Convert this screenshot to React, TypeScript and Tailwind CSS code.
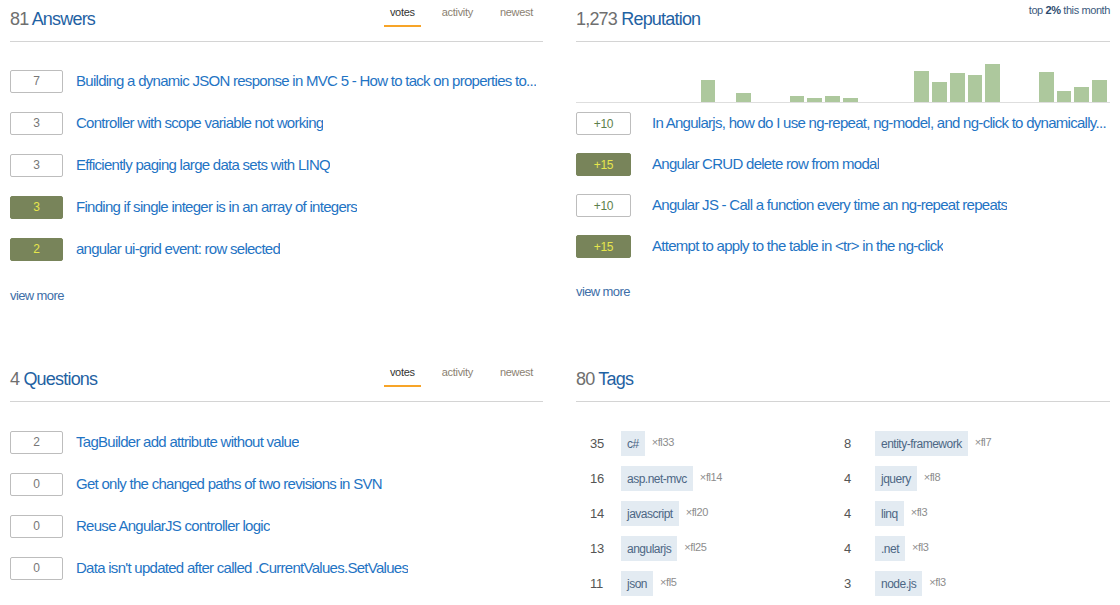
// Profile summary: answers, reputation, questions and tags in a 2x2 layout.

const FONT = "font-['Liberation_Sans',Arial,sans-serif]";

type Post = { score: string; title: string; accepted?: boolean };

const answers: Post[] = [
  { score: "7", title: "Building a dynamic JSON response in MVC 5 - How to tack on properties to..." },
  { score: "3", title: "Controller with scope variable not working" },
  { score: "3", title: "Efficiently paging large data sets with LINQ" },
  { score: "3", title: "Finding if single integer is in an array of integers", accepted: true },
  { score: "2", title: "angular ui-grid event: row selected", accepted: true },
];

const repPosts: Post[] = [
  { score: "+10", title: "In Angularjs, how do I use ng-repeat, ng-model, and ng-click to dynamically..." },
  { score: "+15", title: "Angular CRUD delete row from modal", accepted: true },
  { score: "+10", title: "Angular JS - Call a function every time an ng-repeat repeats" },
  { score: "+15", title: "Attempt to apply to the table in <tr> in the ng-click", accepted: true },
];

const questions: Post[] = [
  { score: "2", title: "TagBuilder add attribute without value" },
  { score: "0", title: "Get only the changed paths of two revisions in SVN" },
  { score: "0", title: "Reuse AngularJS controller logic" },
  { score: "0", title: "Data isn't updated after called .CurrentValues.SetValues" },
];

// bar heights per day of the month (0 = nothing)
const repDays: Record<number, number> = {
  7: 22, 9: 9, 12: 6, 13: 4, 14: 6, 15: 4,
  19: 31, 20: 20, 21: 29, 22: 27, 23: 38,
  26: 30, 27: 11, 28: 15, 29: 22,
};

const tagsLeft = [
  { n: 35, tag: "c#", x: "33" },
  { n: 16, tag: "asp.net-mvc", x: "14" },
  { n: 14, tag: "javascript", x: "20" },
  { n: 13, tag: "angularjs", x: "25" },
  { n: 11, tag: "json", x: "5" },
];
const tagsRight = [
  { n: 8, tag: "entity-framework", x: "7" },
  { n: 4, tag: "jquery", x: "8" },
  { n: 4, tag: "linq", x: "3" },
  { n: 4, tag: ".net", x: "3" },
  { n: 3, tag: "node.js", x: "3" },
];

export default function App() {
  return (
    <div className={`w-[1120px] h-[605px] bg-white overflow-hidden ${FONT}`}>
      <div className="grid grid-cols-[533px_534px] gap-x-[33px] pl-[10px]">
        {/* Answers */}
        <section className="h-[360px]">
          <Header count="81" label="Answers" tabs />
          <div className="mt-[18px]">
            {answers.map((p) => (
              <Row key={p.title} post={p} boxW="w-[53px]" gap="gap-[13px]" rowH="h-[42px]" />
            ))}
          </div>
          <ViewMore className="mt-[19px]" />
        </section>

        {/* Reputation */}
        <section className="h-[360px]">
          <Header
            count="1,273"
            label="Reputation"
            right={
              <p className="self-start mt-[2px] text-[11px] text-[#3b5a7d] tracking-[-0.4px]">
                top <b className="font-bold text-[#2b4a6d]">2%</b> this month
              </p>
            }
          />
          <div className="h-[61px] border-b border-[#dedede] flex items-end">
            {Array.from({ length: 30 }, (_, i) => (
              <div key={i} className="flex-1 flex items-end pr-[3px]">
                {repDays[i] ? (
                  <div className="w-full bg-[#adc89d]" style={{ height: repDays[i] }} />
                ) : null}
              </div>
            ))}
          </div>
          <div>
            {repPosts.map((p) => (
              <Row key={p.title} post={p} boxW="w-[55px]" gap="gap-[21px]" rowH="h-[41px]" rep />
            ))}
          </div>
          <ViewMore className="mt-[18px]" />
        </section>

        {/* Questions */}
        <section>
          <Header count="4" label="Questions" tabs />
          <div className="mt-[19px]">
            {questions.map((p) => (
              <Row key={p.title} post={p} boxW="w-[53px]" gap="gap-[13px]" rowH="h-[42px]" />
            ))}
          </div>
        </section>

        {/* Tags */}
        <section>
          <Header count="80" label="Tags" />
          <div className="mt-[24px] pl-[14px] grid grid-cols-[254px_1fr]">
            <TagColumn items={tagsLeft} />
            <TagColumn items={tagsRight} />
          </div>
        </section>
      </div>
    </div>
  );
}

function Header({
  count,
  label,
  tabs,
  right,
}: {
  count: string;
  label: string;
  tabs?: boolean;
  right?: React.ReactNode;
}) {
  return (
    <div className="h-[42px] border-b border-[#d4d4d4] flex items-center justify-between">
      <h2 className="text-[18px] leading-none pb-[3px] tracking-[-0.8px]">
        <span className="text-[#6f6f6f]">{count}</span>{" "}
        <span className="text-[#1f62a3]">{label}</span>
      </h2>
      {tabs ? (
        <div className="self-start flex gap-[15px] mr-[4px] pt-[6px]">
          {["votes", "activity", "newest"].map((t, i) => (
            <span
              key={t}
              className={[
                "px-[6px] h-[21px] text-[11px] leading-[13px] tracking-[-0.3px]",
                i === 0
                  ? "text-[#333] border-b-2 border-[#f7a428]"
                  : "text-[#8b7f72]",
              ].join(" ")}
            >
              {t}
            </span>
          ))}
        </div>
      ) : null}
      {right}
    </div>
  );
}

function Row({
  post,
  boxW,
  gap,
  rowH,
  rep,
}: {
  post: Post;
  boxW: string;
  gap: string;
  rowH: string;
  rep?: boolean;
}) {
  return (
    <div className={`${rowH} flex items-center ${gap}`}>
      <span
        className={[
          boxW,
          "h-[23px] shrink-0 rounded-[2px] flex items-center justify-center text-[12px] border tracking-[-0.3px]",
          post.accepted
            ? "bg-[#78845a] border-[#78845a] text-[#e6e64c]"
            : rep
              ? "bg-white border-[#bdbdbd] text-[#5d7f4c]"
              : "bg-white border-[#bdbdbd] text-[#777]",
        ].join(" ")}
      >
        {post.score}
      </span>
      <a className="min-w-0 text-[15px] tracking-[-0.72px] text-[#1f74c4] whitespace-nowrap overflow-hidden">
        {post.title}
      </a>
    </div>
  );
}

function ViewMore({ className }: { className?: string }) {
  return (
    <p className={`text-[13px] leading-[14px] tracking-[-0.6px] text-[#3d6ea8] ${className ?? ""}`}>
      view more
    </p>
  );
}

function TagColumn({ items }: { items: { n: number; tag: string; x: string }[] }) {
  return (
    <div>
      {items.map((t) => (
        <div key={t.tag} className="h-[35px] flex items-center">
          <span className="w-[31px] text-[13px] tracking-[-0.3px] text-[#555]">{t.n}</span>
          <span className="h-[25px] px-[6px] bg-[#e3ebf2] text-[12px] tracking-[-0.5px] text-[#4d6785] flex items-center">
            {t.tag}
          </span>
          <span className="ml-[7px] mb-[2px] text-[11px] tracking-[-0.4px] text-[#8d8d8d]">×fl{t.x}</span>
        </div>
      ))}
    </div>
  );
}
